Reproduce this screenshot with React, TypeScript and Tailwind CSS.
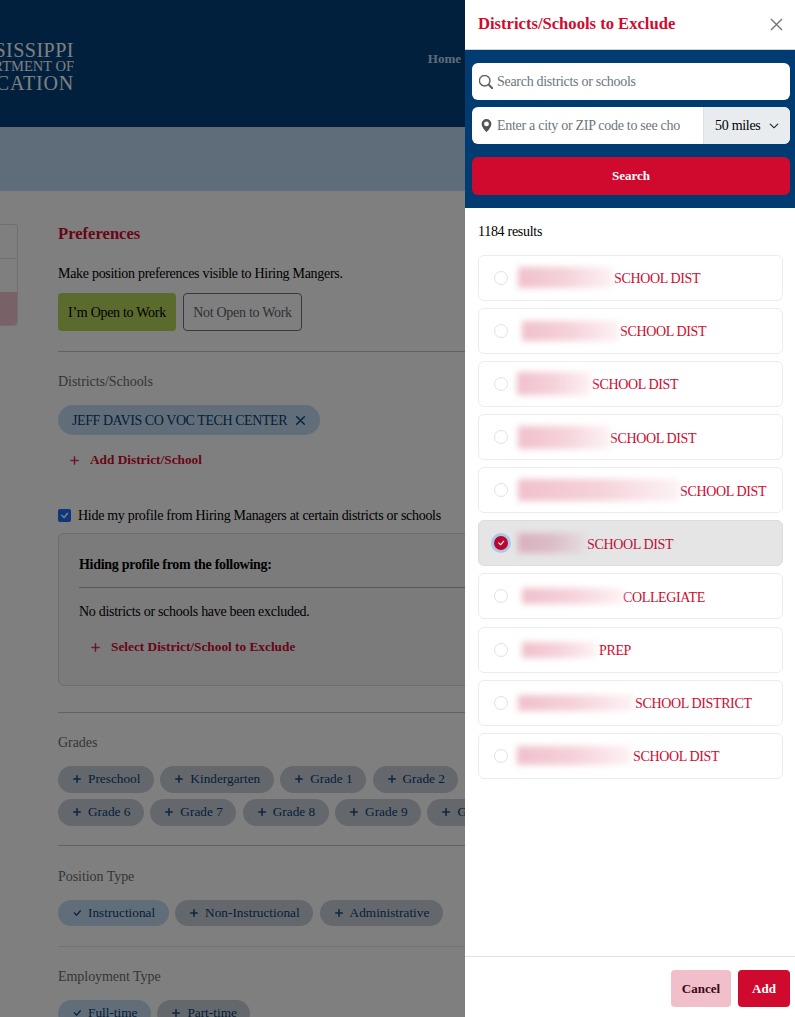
import React from 'react';
import { BsCheck, BsCheckLg, BsChevronDown, BsGeoAltFill, BsPlusLg, BsSearch, BsXLg } from 'react-icons/bs';

const grades = ['Preschool', 'Kindergarten', 'Grade 1', 'Grade 2', 'Grade 3', 'Grade 4', 'Grade 5', 'Grade 6', 'Grade 7', 'Grade 8', 'Grade 9', 'Grade 10', 'Grade 11', 'Grade 12'];

// names are blurred in the source, so only a smear of the same size is kept
const results = [
  { label: 'SCHOOL DIST', smear: 'ml-[10px] w-[95px] h-[21px]', gap: 'ml-px' },
  { label: 'SCHOOL DIST', smear: 'ml-[14px] w-[97px] h-[20px]', gap: 'ml-px' },
  { label: 'SCHOOL DIST', smear: 'ml-[9px] w-[74px] h-[23px]', gap: 'ml-px' },
  { label: 'SCHOOL DIST', smear: 'ml-[10px] w-[92px] h-[23px]', gap: 'ml-0' },
  { label: 'SCHOOL DIST', smear: 'ml-[10px] w-[161px] h-[22px]', gap: 'ml-px' },
  { label: 'SCHOOL DIST', smear: 'ml-[10px] w-[67px] h-[20px]', gap: 'ml-0.5', selected: true },
  { label: 'COLLEGIATE', smear: 'ml-[14px] w-[101px] h-[16px]', gap: 'ml-0' },
  { label: 'PREP', smear: 'ml-[14px] w-[74px] h-[16px]', gap: 'ml-[3px]' },
  { label: 'SCHOOL DISTRICT', smear: 'ml-[10px] w-[115px] h-[16px]', gap: 'ml-0.5' },
  { label: 'SCHOOL DIST', smear: 'ml-[9px] w-[114px] h-[19px]', gap: 'ml-0.5' },
];

function Chip({ label, selected }: { label: string; selected?: boolean }) {
  return (
    <div className={`flex h-[26.5px] items-center gap-[6px] rounded-full pr-[13.4px] pl-[14px] text-[13.3px] tracking-normal text-[#0a3d70] ${selected ? 'bg-[#c3dcf5]' : 'bg-[#c8d0da]'}`}>
      {selected ? <BsCheckLg className="h-[10px] w-[10px] stroke-[0.8px]" /> : <BsPlusLg className="h-[10px] w-[10px] stroke-[1px]" />}
      <span className="whitespace-nowrap">{label}</span>
    </div>
  );
}

function FieldLabel({ children }: { children: React.ReactNode }) {
  return <div className="text-[14px] leading-[20px] tracking-[-0.05px] text-[#6b6b6b]">{children}</div>;
}

function PageBehind() {
  return (
    <div className="w-[795px]">
      <header className="flex h-[127px] items-center justify-between bg-[#00407a]">
        <div className="-ml-[60px] w-[134px] pt-[6px] text-right tracking-normal text-white">
          <div className="text-[20px] leading-[16.5px] tracking-[0.5px] whitespace-nowrap">MISSISSIPPI</div>
          <div className="text-[14.5px] leading-[16.5px] tracking-normal whitespace-nowrap">DEPARTMENT OF</div>
          <div className="text-[20px] leading-[16.5px] tracking-[0.8px] whitespace-nowrap">EDUCATION</div>
        </div>
        <nav className="mr-[334px] pb-[9px] text-[13px] font-bold tracking-normal text-[#c0d8f0]">Home</nav>
      </header>
      <div className="h-[64px] bg-[#bedaf6]" />

      <div className="flex">
        <aside className="mt-[33px] h-[102px] w-[18px] shrink-0 rounded-r-[4px] border border-l-0 border-[#e0e0e0] bg-white">
          <div className="h-[34px] border-b border-[#e0e0e0]" />
          <div className="h-[33px]" />
          <div className="h-[33px] rounded-br-[4px] bg-[#f0c4d0]" />
        </aside>

        <main className="ml-[40px] w-[700px] shrink-0 pt-[31px]">
          <h2 className="text-[16.6px] leading-[24px] font-bold tracking-normal text-[#d00a2f]">Preferences</h2>
          <p className="mt-[17px] text-[14px] leading-[21px] text-black">Make position preferences visible to Hiring Mangers.</p>
          <div className="mt-[9px] flex gap-[7px] text-[14px]">
            <div className="flex h-[38px] w-[118px] items-center justify-center rounded-[4px] bg-[#b7d65a] text-black">I’m Open to Work</div>
            <div className="flex h-[38px] w-[119px] items-center justify-center rounded-[4px] border border-[#6c757d] text-[#5c636a]">Not Open to Work</div>
          </div>

          <div className="mt-[20px] border-t border-[#c4c4c4] pt-[20px]">
            <FieldLabel>Districts/Schools</FieldLabel>
            <div className="mt-[13px] flex h-[30px] w-[262px] items-center gap-[8px] rounded-full bg-[#c3dcf5] pl-[14px] text-[14px] tracking-[-0.43px] text-[#0a3d70]">
              <span className="whitespace-nowrap">JEFF DAVIS CO VOC TECH CENTER</span>
              <BsXLg className="h-[11px] w-[11px] stroke-[1.4px]" />
            </div>
            <div className="mt-[15px] ml-[11px] flex h-[20px] items-center gap-[10px] text-[13.3px] font-bold tracking-normal text-[#d00a2f]">
              <BsPlusLg className="h-[11px] w-[11px] stroke-[0.8px]" />
              <span>Add District/School</span>
            </div>
          </div>

          <label className="mt-[35px] flex h-[20px] items-center gap-[7px] text-[14px] text-black">
            <span className="flex h-[13px] w-[13px] items-center justify-center rounded-[2px] bg-[#1a6ef5] text-white">
              <BsCheck className="h-[13px] w-[13px] stroke-[0.6px]" />
            </span>
            Hide my profile from Hiring Managers at certain districts or schools
          </label>

          <div className="mt-[8px] h-[153px] rounded-[6px] border border-[#d8d8d8] bg-[#f6f6f6] pl-[20px]">
            <div className="mt-[21px] text-[14px] leading-[20px] font-bold text-black">Hiding profile from the following:</div>
            <div className="mt-[12px] border-t border-[#b0b0b0] pt-[14px] text-[14px] leading-[20px] text-black">No districts or schools have been excluded.</div>
            <div className="mt-[15px] ml-[11px] flex h-[20px] items-center gap-[10px] text-[13.3px] font-bold tracking-normal text-[#d00a2f]">
              <BsPlusLg className="h-[11px] w-[11px] stroke-[0.8px]" />
              <span>Select District/School to Exclude</span>
            </div>
          </div>

          <div className="mt-[26px] border-t border-[#c4c4c4] pt-[20px]">
            <FieldLabel>Grades</FieldLabel>
            <div className="mt-[13px] flex w-[695px] flex-wrap gap-[6.5px]">
              {grades.map((g) => (
                <Chip key={g} label={g} />
              ))}
            </div>
          </div>

          <div className="mt-[19.5px] border-t border-[#c4c4c4] pt-[20.5px]">
            <FieldLabel>Position Type</FieldLabel>
            <div className="mt-[13px] flex gap-[6.5px]">
              <Chip label="Instructional" selected />
              <Chip label="Non-Instructional" />
              <Chip label="Administrative" />
            </div>
          </div>

          <div className="mt-[20px] border-t border-[#e4e4e4] pt-[20px]">
            <FieldLabel>Employment Type</FieldLabel>
            <div className="mt-[13px] flex gap-[6.5px]">
              <Chip label="Full-time" selected />
              <Chip label="Part-time" />
            </div>
          </div>
        </main>
      </div>
    </div>
  );
}

function ResultRow({ label, smear, gap, selected }: { label: string; smear: string; gap: string; selected?: boolean }) {
  return (
    <div className={`flex h-[46px] items-center rounded-[6px] border pl-[15px] text-[14px] tracking-[-0.36px] ${selected ? 'border-[#dcdcdc] bg-[#e5e5e5] text-[#b8123a]' : 'border-[#ececf0] bg-white text-[#d00a2f]'}`}>
      {selected ? (
        <span className="flex h-[14px] w-[14px] shrink-0 items-center justify-center rounded-full bg-[#b8062c] text-white ring-[3px] ring-[#aec6e8]">
          <BsCheckLg className="h-[8px] w-[8px] stroke-[1px]" />
        </span>
      ) : (
        <span className="h-[14px] w-[14px] shrink-0 rounded-full border border-[#dfe2e6] bg-white" />
      )}
      <span className={`${smear} shrink-0 bg-linear-to-r blur-[3px] ${selected ? 'from-[#d9b0bc] via-[#dcbcc6] to-[#e3dcde]' : 'from-[#f0c0cc] via-[#f5d2da] to-[#fdf2f4]'}`} />
      <span className={`${gap} pt-[2px] whitespace-nowrap`}>{label}</span>
    </div>
  );
}

export default function App() {
  return (
    <div className="relative h-[1017px] w-[795px] overflow-hidden bg-white font-['Liberation_Serif',serif] tracking-[-0.29px]">
      <PageBehind />
      <div className="absolute inset-0 bg-black/50" />

      <aside className="absolute top-0 right-0 flex h-full w-[330px] flex-col bg-white">
        <div className="flex h-[50px] shrink-0 items-center justify-between border-b border-[#c8d2dc] pr-[11px] pb-[1px] pl-[13px]">
          <h2 className="text-[16.6px] font-bold tracking-normal text-[#d00a2f]">Districts/Schools to Exclude</h2>
          <BsXLg className="h-[15px] w-[15px] stroke-[0.4px] text-[#6b6b6b]" />
        </div>

        <div className="flex h-[158px] shrink-0 flex-col bg-[#003c71] pt-[13px] pr-[5px] pl-[7px]">
          <div className="flex h-[37px] items-center gap-[4px] rounded-[6px] bg-white pl-[7px] text-[14px] text-[#6c757d]">
            <BsSearch className="h-[14px] w-[14px] stroke-[0.5px] text-[#555]" />
            Search districts or schools
          </div>
          <div className="mt-[7px] flex h-[37px] overflow-hidden rounded-[6px] bg-white text-[14px]">
            <div className="flex min-w-0 flex-1 items-center gap-[4px] pl-[8px] text-[#6c757d]">
              <BsGeoAltFill className="h-[13px] w-[13px] shrink-0 text-[#555]" />
              <span className="w-[183px] overflow-hidden whitespace-nowrap">Enter a city or ZIP code to see choices</span>
            </div>
            <div className="flex w-[87px] items-center gap-[8px] border-l border-[#dee2e6] bg-[#e9ecef] pl-[11px] text-black">
              50 miles
              <BsChevronDown className="h-[10px] w-[10px] stroke-[0.8px]" />
            </div>
          </div>
          <div className="mt-[13px] flex h-[38px] items-center justify-center rounded-[6px] bg-[#d00a2f] text-[13px] font-bold tracking-normal text-white">Search</div>
        </div>

        <div className="flex-1 pr-[12px] pl-[13px]">
          <div className="mt-[14px] text-[14px] leading-[20px] text-black">1184 results</div>
          <div className="mt-[12.6px] flex flex-col gap-[7.15px]">
            {results.map((r, i) => (
              <ResultRow key={i} {...r} />
            ))}
          </div>
        </div>

        <div className="flex h-[61px] shrink-0 items-start justify-end gap-[7px] border-t border-[#dee2e6] pt-[13px] pr-[5px] text-[13px] font-bold tracking-normal">
          <div className="flex h-[37px] w-[60px] items-center justify-center rounded-[4px] bg-[#f0bfc9] text-[#3a0a18]">Cancel</div>
          <div className="flex h-[37px] w-[52px] items-center justify-center rounded-[4px] bg-[#d00a2f] text-white">Add</div>
        </div>
      </aside>
    </div>
  );
}
